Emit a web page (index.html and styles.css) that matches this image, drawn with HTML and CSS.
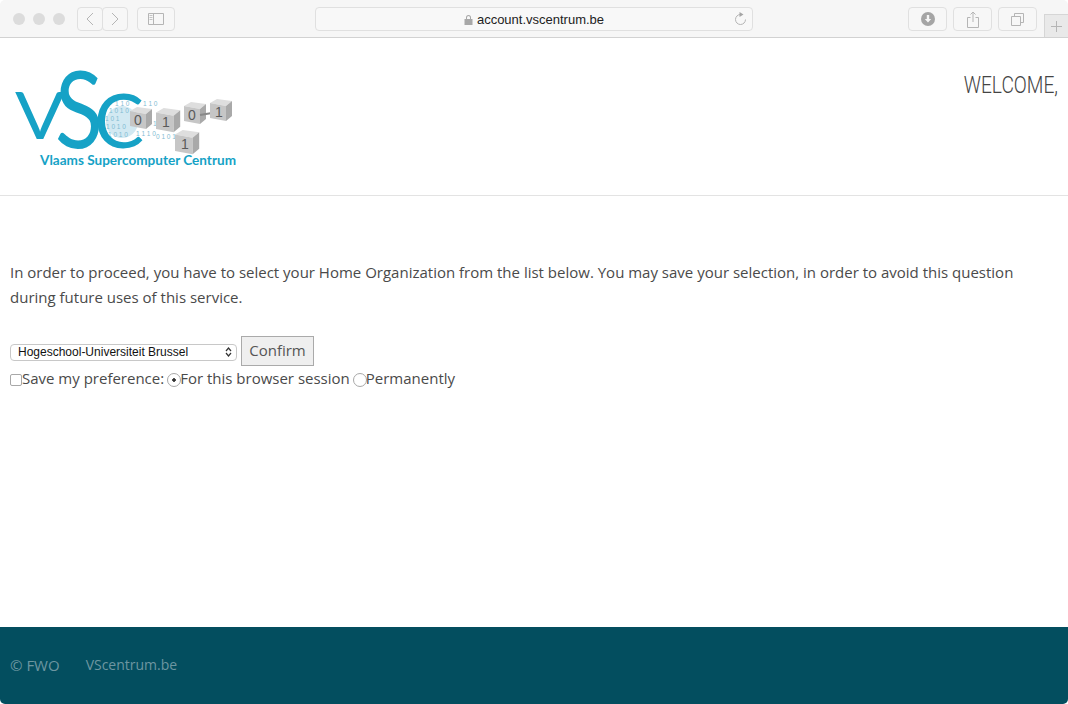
FILE: index.html
```html
<!DOCTYPE html>
<html lang="en">

<head>
    <meta charset="UTF-8">
    <meta name="viewport" content="width=device-width, initial-scale=1.0">
    <title>account.vscentrum.be</title>
    <link rel="stylesheet" href="styles.css">
</head>

<body>
    <div class="window">
        <div class="toolbar">
            <div class="lights"><span></span><span></span><span></span></div>
            <div class="nav-buttons">
                <div class="tool-btn nav-btn"><svg width="10" height="14" viewBox="0 0 10 14"><path d="M8 1 2 7l6 6" /></svg></div>
                <div class="tool-btn nav-btn"><svg width="10" height="14" viewBox="0 0 10 14"><path d="m2 1 6 6-6 6" /></svg></div>
            </div>
            <div class="tool-btn sidebar-btn">
                <svg width="16" height="12" viewBox="0 0 16 12"><path d="M.5.5h15v11H.5zM5.500.5v11" /><path class="thin" d="M1.500 2.500h3M1.500 4.500h3M1.500 6.500h3" /></svg>
            </div>
            <div class="address">
                <svg class="lock" width="9" height="11" viewBox="0 0 9 11"><path d="M2 5V3.500a2.500 2.500 0 0 1 5 0V5h1.500v6H.5V5zm1 0h3V3.500a1.500 1.500 0 0 0-3 0z" /></svg>
                <span class="url">account.vscentrum.be</span>
                <svg class="reload" width="14" height="14" viewBox="0 0 14 14"><path d="M7.500 2.500a5 5 0 1 0 5 5" /><path class="fill" d="M6.500 0l4 2.500-4 2.500z" /></svg>
            </div>
            <div class="right-tools">
                <div class="tool-btn small-btn">
                    <svg width="14" height="14" viewBox="0 0 14 14"><circle class="fill" cx="7" cy="7" r="7" /><path class="white" d="M5.800 3h2.400v4h2L7 10.500 3.800 7h2z" /></svg>
                </div>
                <div class="tool-btn small-btn">
                    <svg width="12" height="17" viewBox="0 0 12 17"><path d="M3.500 6.500h-3v10h11v-10h-3M6 11V1M3.500 3.500 6 1l2.500 2.500" /></svg>
                </div>
                <div class="tool-btn small-btn">
                    <svg width="13" height="13" viewBox="0 0 13 13"><path d="M.5 3.500h9v9h-9zM3.500 3.500v-3h9v9h-3" /></svg>
                </div>
            </div>
            <div class="new-tab"><svg width="11" height="11" viewBox="0 0 11 11"><path d="M5.500 0v11M0 5.500h11" /></svg></div>
        </div>

        <header class="site-header">
            <svg class="logo" width="228" height="108" viewBox="0 0 228 108">
                <defs>
                    <g id="cube">
                        <path class="top" d="M0 4 7 0l15 2-6 5z" />
                        <path class="front" d="M0 4l16 3v15L0 19z" />
                        <path class="side" d="M16 7l6-5v15l-6 5z" />
                    </g>
                </defs>
                <circle class="globe" cx="112" cy="59" r="16" />
                <g class="bits">
                    <text x="105" y="43">1 1 0</text><text x="133" y="43">1 1 0</text>
                    <text x="99" y="50">1 0 1 0</text>
                    <text x="95" y="58">1 0 1</text>
                    <text x="96" y="66">1 0 1 0</text>
                    <text x="98" y="74">1 0 1 0</text>
                    <text x="143" y="63">1 0</text><text x="126" y="73">1 1 1 0</text>
                    <text x="146" y="76">0 1 0 1</text>
                </g>
                <text class="mark" x="5" y="76" textLength="50" lengthAdjust="spacingAndGlyphs">V</text>
                <text class="mark mark-s" x="45" y="85" textLength="48" lengthAdjust="spacingAndGlyphs">S</text>
                <text class="mark mark-c" x="84" y="85" textLength="50" lengthAdjust="spacingAndGlyphs">C</text>
                <use href="#cube" x="120" y="44" />
                <text class="digit" x="124" y="62">0</text>
                <use href="#cube" transform="translate(146 45) scale(1.100)" />
                <text class="digit" x="152" y="64">1</text>
                <use href="#cube" x="174" y="39" />
                <text class="digit" x="178" y="57">0</text>
                <path class="link" d="M190 52l12-2" />
                <use href="#cube" x="200" y="36" />
                <text class="digit" x="205" y="54">1</text>
                <use href="#cube" transform="translate(165 67) scale(1.100)" />
                <text class="digit" x="171" y="86">1</text>
                <text class="tagline" x="30" y="102" textLength="196" lengthAdjust="spacingAndGlyphs">Vlaams Supercomputer Centrum</text>
            </svg>
            <div class="welcome">WELCOME,</div>
        </header>

        <main class="content">
            <p class="intro">In order to proceed, you have to select your Home Organization from the list below. You may save your selection, in order to avoid this question during future uses of this service.</p>
            <form class="org-form">
                <div class="select-row">
                    <select class="org-select">
                        <option>Hogeschool-Universiteit Brussel</option>
                    </select>
                    <button type="button" class="confirm">Confirm</button>
                </div>
                <div class="pref-row">
                    <input type="checkbox" class="check" id="save"><label for="save">Save my preference:</label>
                    <input type="radio" class="radio" name="pref" id="session" checked><label for="session">For this browser session</label>
                    <input type="radio" class="radio" name="pref" id="perm"><label for="perm">Permanently</label>
                </div>
            </form>
        </main>

        <footer class="site-footer">
            <span class="copy">© FWO</span>
            <a href="#">VScentrum.be</a>
        </footer>
    </div>
</body>

</html>
```

FILE: styles.css
```css
html, body {
    margin: 0;
    padding: 0;
    background-color: #fff;
}

.window {
    height: 704px;
    display: flex;
    flex-direction: column;
    overflow: hidden;
    border-radius: 5px;
    font-family: 'Open Sans', sans-serif;
    color: #4a4a4a;
}

/* browser toolbar */
.toolbar {
    height: 36px;
    flex: none;
    display: flex;
    align-items: center;
    position: relative;
    background-color: #f6f6f6;
    border-bottom: 1px solid #d2d2d2;
    padding: 1px 0 0 13px;
}

.toolbar svg path {
    fill: none;
    stroke: #b5b5b5;
    stroke-width: 1;
}

.lights {
    display: flex;
    gap: 8px;
    margin-right: 12px;
}

.lights span {
    width: 12px;
    height: 12px;
    border-radius: 50%;
    background-color: #dcdcdc;
}

.tool-btn {
    height: 24px;
    box-sizing: border-box;
    display: flex;
    align-items: center;
    justify-content: center;
    border: 1px solid #e0e0e0;
    border-radius: 4px;
    background-color: #f7f7f7;
}

.nav-buttons {
    display: flex;
    margin-right: 9px;
}

.nav-btn {
    width: 26px;
}

.nav-btn + .nav-btn {
    margin-left: -1px;
}

.sidebar-btn {
    width: 38px;
    margin-right: 140px;
}

.toolbar svg path.thin {
    stroke: #c4c4c4;
}

.address {
    width: 438px;
    height: 24px;
    box-sizing: border-box;
    display: flex;
    align-items: center;
    justify-content: center;
    position: relative;
    border: 1px solid #e0e0e0;
    border-radius: 4px;
    background-color: #f8f8f8;
    margin-right: 155px;
}

.toolbar svg.lock path {
    fill: #a8a8a8;
    stroke: none;
}

.url {
    font-family: 'Liberation Sans', sans-serif;
    font-size: 13px;
    color: #222;
    margin-left: 4px;
}

.reload {
    position: absolute;
    right: 5px;
    top: 4px;
}

.toolbar svg path.fill,
.toolbar svg circle.fill {
    fill: #a5a5a5;
    stroke: none;
}

.toolbar svg path.white {
    fill: #f6f6f6;
    stroke: none;
}

.right-tools {
    display: flex;
    gap: 6px;
}

.small-btn {
    width: 39px;
}

.new-tab {
    position: absolute;
    right: 0;
    top: 14px;
    width: 24px;
    height: 23px;
    box-sizing: border-box;
    display: flex;
    align-items: center;
    justify-content: center;
    background-color: #e9e9e9;
    border: 1px solid #d6d6d6;
    border-right: none;
    border-bottom: none;
}

/* page */
.site-header {
    height: 158px;
    flex: none;
    box-sizing: border-box;
    display: flex;
    justify-content: space-between;
    align-items: flex-start;
    border-bottom: 1px solid #e3e3e3;
}

.logo {
    margin: 25px 0 0 10px;
}

.logo .mark {
    font-family: 'Lato', sans-serif;
    font-size: 66px;
    font-weight: 400;
    fill: #16a2c6;
}

.logo .mark-s {
    font-size: 106px;
}

.logo .mark-c {
    font-size: 76px;
}

.logo .bits text {
    font-family: 'Liberation Sans', sans-serif;
    font-size: 6.500px;
    fill: #7fbcd2;
}

.logo .globe {
    fill: #a6d4e6;
    opacity: 0.5;
}

.logo .digit {
    font-family: 'Liberation Sans', sans-serif;
    font-size: 14px;
    fill: #5a5a5a;
}

.logo .top {
    fill: #dedede;
}

.logo .front {
    fill: #c6c6c6;
}

.logo .side {
    fill: #a9a9a9;
}

.logo .link {
    stroke: #888;
    stroke-width: 2;
}

.logo .tagline {
    font-family: 'Lato', sans-serif;
    font-size: 13px;
    font-weight: 700;
    fill: #16a2c6;
}

.welcome {
    font-family: 'Roboto', sans-serif;
    font-weight: 300;
    font-size: 23px;
    line-height: 28px;
    color: #444;
    margin: 34px 10px 0 0;
    transform: scaleX(0.834);
    transform-origin: right center;
}

.content {
    flex: 1;
    padding: 64px 10px 0;
}

.intro {
    margin: 0 0 26px;
    font-size: 15px;
    line-height: 25px;
}

.select-row {
    display: flex;
    align-items: center;
    gap: 4px;
}

.org-select {
    appearance: none;
    width: 227px;
    height: 17px;
    box-sizing: border-box;
    padding: 0 0 0 7px;
    font-family: 'Liberation Sans', sans-serif;
    font-size: 12px;
    color: #111;
    border: 1px solid #c8c8c8;
    border-radius: 4px;
    background: #fff url("data:image/svg+xml,%3Csvg xmlns='http://www.w3.org/2000/svg' width='7' height='10'%3E%3Cpath d='M1 4l2.500-3L6 4M1 6l2.500 3L6 6' fill='none' stroke='%23333' stroke-width='1.200'/%3E%3C/svg%3E") no-repeat right 4px center;
    margin-top: 2px;
}

.confirm {
    width: 73px;
    height: 30px;
    padding: 0 0 2px;
    font-family: 'Open Sans', sans-serif;
    font-size: 15px;
    color: #555;
    background-color: #efefef;
    border: 1px solid #aaa;
}

.pref-row {
    display: flex;
    align-items: center;
    height: 25px;
    font-size: 15px;
}

.pref-row label {
    margin-top: -2px;
}

.check,
.radio {
    appearance: none;
    margin: 2px 0 0;
    box-sizing: border-box;
    background-color: #fff;
    border: 1px solid #a8a8a8;
    flex: none;
}

.check {
    width: 12px;
    height: 12px;
    border-radius: 2px;
}

.radio {
    width: 14px;
    height: 14px;
    border-radius: 50%;
    margin-left: 3px;
    margin-right: -1px;
}

.radio:checked {
    background-image: radial-gradient(circle, #333 0, #333 1.500px, transparent 2px);
}

.site-footer {
    height: 77px;
    flex: none;
    box-sizing: border-box;
    display: flex;
    align-items: center;
    gap: 26px;
    padding: 0 10px 2px;
    background-color: #034e5f;
    font-size: 14px;
    color: #6d96a1;
}

.site-footer .copy {
    font-size: 15px;
}

.site-footer a {
    color: #6d96a1;
    text-decoration: none;
}
```
